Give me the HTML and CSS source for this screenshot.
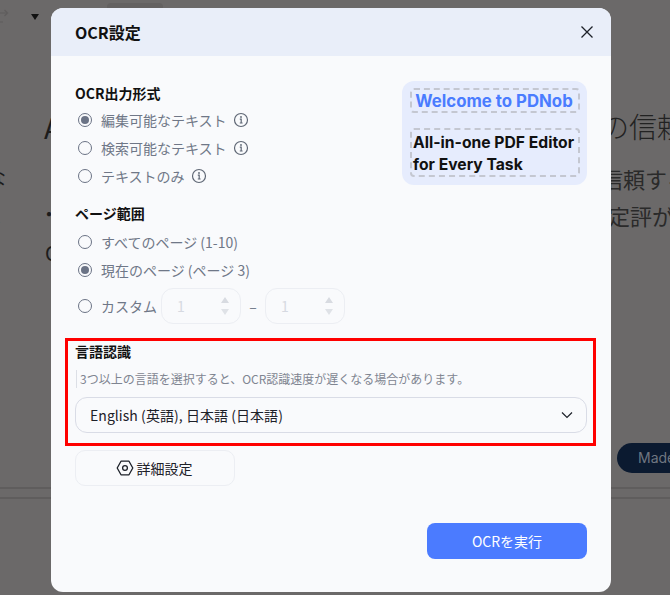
FILE: index.html
```html
<!DOCTYPE html>
<html lang="ja">
<head>
    <meta charset="UTF-8">
    <title>OCR設定</title>
    <link rel="stylesheet" href="styles.css">
</head>
<body>
    <!-- dimmed page behind the dialog -->
    <div class="backdrop">
        <svg class="bg-arrow" width="10" height="16" viewBox="0 0 10 16"><path d="M0 5h7M4.5 2l3 3-3 3M0 14h3" fill="none" stroke="#5f5d5d" stroke-width="1.2"/></svg>
        <span class="bg-caret"></span>
        <span class="bg-tab"></span>
        <span class="bg-text bg-a">A</span>
        <span class="bg-text bg-na">な</span>
        <span class="bg-text bg-comma">、</span>
        <span class="bg-text bg-dot">・</span>
        <span class="bg-text bg-o">O</span>
        <span class="bg-text bg-heading">の信頼</span>
        <span class="bg-text bg-line1">信頼する</span>
        <span class="bg-text bg-line2">定評が</span>
        <span class="bg-pill">Made</span>
        <span class="bg-rule bg-rule1"></span>
        <span class="bg-rule bg-rule2"></span>
    </div>

    <div class="overlay">
        <div class="modal">
            <div class="modal-header">
                <h2 class="modal-title">OCR設定</h2>
                <svg class="close-icon" width="14" height="14" viewBox="0 0 14 14"><path d="M1.5 1.5l11 11M12.5 1.5l-11 11" fill="none" stroke="#1d2129" stroke-width="1.3"/></svg>
            </div>
            <div class="modal-body">
                <div class="top-row">
                    <div class="options">
                        <h3 class="group-title">OCR出力形式</h3>
                        <div class="radio-row"><span class="radio checked"></span>編集可能なテキスト<svg class="info" width="16" height="16" viewBox="0 0 16 16"><circle cx="8" cy="8" r="6.5" fill="none" stroke="#5f6775" stroke-width="1.2"/><path d="M6.8 7.2H8.2V11M6.8 11h2.8" fill="none" stroke="#5f6775" stroke-width="1.2"/><circle cx="8" cy="5" r=".9" fill="#5f6775"/></svg></div>
                        <div class="radio-row"><span class="radio"></span>検索可能なテキスト<svg class="info" width="16" height="16" viewBox="0 0 16 16"><circle cx="8" cy="8" r="6.5" fill="none" stroke="#5f6775" stroke-width="1.2"/><path d="M6.8 7.2H8.2V11M6.8 11h2.8" fill="none" stroke="#5f6775" stroke-width="1.2"/><circle cx="8" cy="5" r=".9" fill="#5f6775"/></svg></div>
                        <div class="radio-row"><span class="radio"></span>テキストのみ<svg class="info" width="16" height="16" viewBox="0 0 16 16"><circle cx="8" cy="8" r="6.5" fill="none" stroke="#5f6775" stroke-width="1.2"/><path d="M6.8 7.2H8.2V11M6.8 11h2.8" fill="none" stroke="#5f6775" stroke-width="1.2"/><circle cx="8" cy="5" r=".9" fill="#5f6775"/></svg></div>

                        <h3 class="group-title page-title">ページ範囲</h3>
                        <div class="radio-row"><span class="radio"></span>すべてのページ (1-10)</div>
                        <div class="radio-row"><span class="radio checked"></span>現在のページ (ページ 3)</div>
                        <div class="radio-row custom-row">
                            <span class="radio"></span>カスタム
                            <div class="num-input">1<span class="spin"><i class="up"></i><i class="down"></i></span></div>
                            <span class="dash">–</span>
                            <div class="num-input">1<span class="spin"><i class="up"></i><i class="down"></i></span></div>
                        </div>
                    </div>
                    <div class="promo">
                        <div class="promo-welcome">Welcome to PDNob</div>
                        <div class="promo-tagline">All-in-one PDF Editor<br>for Every Task</div>
                    </div>
                </div>

                <div class="lang-section">
                    <h3 class="group-title">言語認識</h3>
                    <p class="hint">3つ以上の言語を選択すると、OCR認識速度が遅くなる場合があります。</p>
                    <div class="lang-select">
                        <span>English (英語), 日本語 (日本語)</span>
                        <svg width="12" height="8" viewBox="0 0 12 8"><path d="M1 1.5l5 5 5-5" fill="none" stroke="#1d2129" stroke-width="1.2"/></svg>
                    </div>
                </div>

                <button class="advanced-btn" type="button">
                    <svg width="18" height="16" viewBox="0 0 18 16"><path d="M5 1.2h8L16.8 8 13 14.8H5L1.2 8z" fill="none" stroke="#1d2129" stroke-width="1.3" stroke-linejoin="round"/><circle cx="9" cy="8" r="2.4" fill="none" stroke="#1d2129" stroke-width="1.3"/></svg>
                    詳細設定
                </button>

                <div class="modal-footer">
                    <button class="run-btn" type="button">OCRを実行</button>
                </div>
            </div>
        </div>
    </div>
</body>
</html>
```

FILE: styles.css
```css
* {
    box-sizing: border-box;
}
html, body {
    height: 100%;
}
body {
    margin: 0;
    overflow: hidden;
    background-color: #6b6969;
    font-family: 'Noto Sans CJK JP', 'Noto Sans', sans-serif;
    color: #1d2129;
}

/* page behind the dialog */
.backdrop {
    position: absolute;
    inset: 0;
    overflow: hidden;
}
.bg-arrow {
    position: absolute;
    left: 0;
    top: 8px;
}
.bg-caret {
    position: absolute;
    left: 31px;
    top: 14px;
    border-left: 4px solid transparent;
    border-right: 4px solid transparent;
    border-top: 6px solid #111;
}
.bg-tab {
    position: absolute;
    left: 107px;
    top: 3px;
    width: 56px;
    height: 8px;
    background-color: #636161;
    border-radius: 4px;
}
.bg-text {
    position: absolute;
    color: #1c1c1c;
    white-space: nowrap;
    line-height: 1;
}
.bg-a { left: 44px; top: 113px; font-size: 28px; }
.bg-na { left: -14px; top: 168px; font-size: 20px; }
.bg-comma { left: -7px; top: 205px; font-size: 20px; }
.bg-dot { left: 39px; top: 204px; font-size: 20px; }
.bg-o { left: 45px; top: 243px; font-size: 20px; }
.bg-heading { left: 601px; top: 112px; font-size: 28px; color: #222; font-weight: 300; }
.bg-line1 { left: 601px; top: 167px; font-size: 22px; color: #2a2a2a; }
.bg-line2 { left: 608px; top: 204px; font-size: 22px; color: #2a2a2a; }
.bg-pill {
    position: absolute;
    left: 617px;
    top: 443px;
    width: 90px;
    height: 30px;
    padding-left: 21px;
    border-radius: 15px;
    background-color: #0b1a30;
    color: #6f7680;
    font-size: 14px;
    line-height: 30px;
    font-family: 'Inter', sans-serif;
}
.bg-rule {
    position: absolute;
    left: 0;
    right: 0;
    height: 2px;
    background-color: #5f5d5d;
}
.bg-rule1 { top: 487px; }
.bg-rule2 { top: 497px; }

/* dialog */
.overlay {
    position: absolute;
    inset: 0;
    padding: 8px 59px 3px 51px;
}
.modal {
    display: flex;
    flex-direction: column;
    width: 560px;
    height: 584px;
    background-color: #f9fafc;
    border-radius: 12px;
    overflow: hidden;
}
.modal-header {
    display: flex;
    align-items: center;
    justify-content: space-between;
    flex-shrink: 0;
    height: 48px;
    padding: 0 17px 0 24px;
    background-color: #e9eef9;
}
.modal-title {
    margin: 0;
    font-size: 16px;
    font-weight: 700;
    color: #111;
}
.modal-body {
    display: flex;
    flex-direction: column;
    flex: 1;
    padding: 25px 24px 33px;
}
.top-row {
    display: flex;
    justify-content: space-between;
    align-items: flex-start;
}
.group-title {
    margin: 0 0 1px;
    font-size: 14px;
    line-height: 24px;
    font-weight: 700;
    color: #111;
}
.page-title {
    margin: 11px 0 3px;
}
.radio-row {
    display: flex;
    align-items: center;
    height: 28px;
    padding-left: 3px;
    font-size: 14px;
    color: #6f7787;
}
.radio {
    width: 14px;
    height: 14px;
    margin-right: 9px;
    border: 1.5px solid #6b7385;
    border-radius: 50%;
    flex-shrink: 0;
}
.radio.checked {
    padding: 2px;
    background-color: #6b7385;
    background-clip: content-box;
}
.info {
    margin-left: 6px;
}
.custom-row {
    height: 36px;
    margin-top: 4px;
}
.num-input {
    position: relative;
    width: 80px;
    height: 36px;
    margin-left: 4px;
    padding-left: 15px;
    border: 1px solid #eceef3;
    border-radius: 12px;
    font-size: 14px;
    line-height: 34px;
    color: #d6d9e1;
}
.spin {
    position: absolute;
    right: 11px;
    top: 8px;
    display: flex;
    flex-direction: column;
    gap: 6px;
}
.spin i {
    width: 0;
    height: 0;
    border-left: 4px solid transparent;
    border-right: 4px solid transparent;
}
.spin .up {
    border-bottom: 6px solid #d8dbe1;
}
.spin .down {
    border-top: 6px solid #dfe2e7;
}
.dash {
    width: 24px;
    text-align: center;
    color: #6f7787;
}
.custom-row .dash + .num-input {
    margin-left: 0;
}

.promo {
    display: flex;
    flex-direction: column;
    gap: 15px;
    width: 185px;
    height: 104px;
    padding: 7px 7px 8px 8px;
    background-color: #e6ecfd;
    border-radius: 12px;
    font-family: 'Inter', sans-serif;
    font-weight: 700;
}
.promo-welcome {
    height: 25px;
    padding-right: 2px;
    border: 2px dashed #c4c7d1;
    border-radius: 4px;
    font-size: 16.8px;
    line-height: 22px;
    text-align: center;
    color: #4a7cff;
    white-space: nowrap;
}
.promo-tagline {
    height: 49px;
    padding: 2px 0 0 1px;
    border: 2px dashed #c4c7d1;
    border-radius: 4px;
    font-size: 15.7px;
    line-height: 22px;
    color: #111;
    white-space: nowrap;
}

.lang-section {
    width: 531px;
    height: 108px;
    margin: 14px 0 4px -10px;
    padding: 0 6px 0 7px;
    border: 3px solid #f00;
}
.lang-section .group-title {
    margin: 0;
    line-height: 21px;
}
.hint {
    height: 18px;
    margin: 8px 0 9px 1px;
    padding-left: 3px;
    border-left: 1px solid #dcdfe6;
    font-size: 12px;
    line-height: 18px;
    color: #7f8591;
    white-space: nowrap;
}
.lang-select {
    display: flex;
    align-items: center;
    justify-content: space-between;
    height: 36px;
    padding: 0 13px 0 14px;
    border: 1px solid #d9dce6;
    border-radius: 12px;
    font-size: 14px;
    letter-spacing: .05px;
    color: #1d2129;
}
.advanced-btn {
    display: flex;
    align-items: center;
    justify-content: center;
    gap: 3px;
    width: 160px;
    height: 36px;
    padding: 0 2px 0 0;
    border: 1px solid #eceef3;
    border-radius: 10px;
    background: none;
    font-family: inherit;
    font-size: 14px;
    color: #1d2129;
}
.modal-footer {
    display: flex;
    justify-content: flex-end;
    margin-top: auto;
}
.run-btn {
    width: 160px;
    height: 36px;
    border: none;
    border-radius: 8px;
    background-color: #4b7bff;
    color: #fff;
    font-family: inherit;
    font-size: 14px;
}
```
